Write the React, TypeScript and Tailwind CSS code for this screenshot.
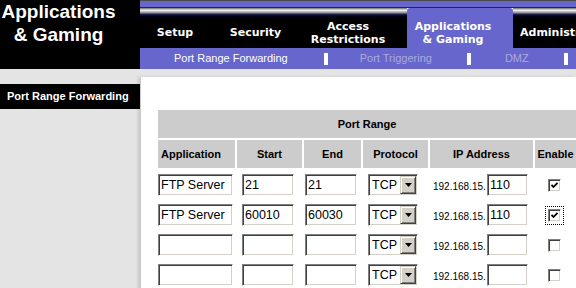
const PURPLE = 'bg-[#6666cc]';

function Stripes() {
  return (
    <div className="flex flex-col">
      <div className="h-[1px] bg-[#8a8a8a]" />
      <div className="h-[1px] bg-[#c4c4c4]" />
      <div className="h-[1px] bg-[#ececec]" />
      <div className="h-[1px] bg-[#c0c0c0]" />
      <div className="h-[1px] bg-[#9a9a9a]" />
      <div className="h-[1px] bg-[#5a5a5a]" />
      <div className="h-[1px] bg-[#1c1c44]" />
      <div className="h-[1px] bg-[#0a0a33]" />
      <div className="h-[1px] bg-[#000018]" />
    </div>
  );
}

function Tab({ w, children, left }: { w: string; children: React.ReactNode; left?: boolean }) {
  return (
    <div className={`${w} flex flex-col shrink-0`}>
      <Stripes />
      <div
        className={`flex-1 bg-black flex items-center text-white font-bold text-[11px] leading-[13px] whitespace-nowrap font-['DejaVu_Sans',Verdana,sans-serif] ${
          left ? 'justify-start pl-[7px]' : 'justify-center text-center'
        }`}
      >
        <div>{children}</div>
      </div>
    </div>
  );
}

function Field({ w, value, className = '' }: { w: string; value?: string; className?: string }) {
  return (
    <div
      className={`${w} ${className} h-[22px] bg-white border border-t-[#808080] border-l-[#808080] border-b-white border-r-white shadow-[inset_1px_1px_0_#404040,inset_-1px_-1px_0_#d4d0c8] flex items-center pl-[2px] text-[12.5px] text-black leading-none shrink-0`}
    >
      {value}
    </div>
  );
}

function Select() {
  return (
    <div className="ml-[5px] w-[50px] h-[22px] bg-white border border-t-[#808080] border-l-[#808080] border-b-white border-r-white shadow-[inset_1px_1px_0_#404040,inset_-1px_-1px_0_#d4d0c8] flex items-stretch p-[1px]">
      <div className="flex-1 flex items-center pl-[2px] text-[12.5px] leading-none text-black">TCP</div>
      <div className="w-[16px] bg-[#d4d0c8] border border-t-[#d4d0c8] border-l-[#d4d0c8] border-b-[#404040] border-r-[#404040] shadow-[inset_1px_1px_0_#ffffff,inset_-1px_-1px_0_#808080] flex items-center justify-center">
        <svg width="7" height="4" viewBox="0 0 7 4">
          <polygon points="0,0 7,0 3.5,4" fill="black" />
        </svg>
      </div>
    </div>
  );
}

function Check({ checked, focus }: { checked?: boolean; focus?: boolean }) {
  return (
    <div
      className={`ml-[13px] w-[13px] h-[13px] bg-white border border-t-[#808080] border-l-[#808080] border-b-white border-r-white shadow-[inset_1px_1px_0_#404040,inset_-1px_-1px_0_#d4d0c8] flex items-center justify-center ${
        focus ? 'outline-1 outline-dotted outline-black outline-offset-[2px]' : ''
      }`}
    >
      {checked && (
        <svg width="9" height="9" viewBox="0 0 9 9">
          <polyline points="1.5,3.8 3.5,6 7.5,1.8" fill="none" stroke="black" strokeWidth="1.8" />
        </svg>
      )}
    </div>
  );
}

const rows = [
  { app: 'FTP Server', start: '21', end: '21', ip: '110', on: true },
  { app: 'FTP Server', start: '60010', end: '60030', ip: '110', on: true, focus: true },
  { app: '', start: '', end: '', ip: '', on: false },
  { app: '', start: '', end: '', ip: '', on: false },
];

const cols = 'grid grid-cols-[77px_65px_57px_65px_103px_41px] gap-x-[2px]';

export default function App() {
  return (
    <div className="w-[576px] h-[288px] overflow-hidden bg-white font-['Liberation_Sans',Arial,sans-serif]">
      {/* Header */}
      <div className="flex h-[69px]">
        <div className="w-[140px] shrink-0 bg-black">
          <div className="w-[117px] text-center text-white font-bold text-[19px] leading-[23px] whitespace-nowrap">
            Applications
            <br />
            &amp; Gaming
          </div>
        </div>
        <div className="flex-1 min-w-0 flex flex-col">
          <div className="h-[1px] bg-[#4a4a4a]" />
          <div className={`h-[6px] ${PURPLE}`} />
          <div className="h-[1px] bg-[#2a2a2a]" />
          <div className="flex h-[40px] overflow-hidden">
            <Tab w="w-[70px]">Setup</Tab>
            <Tab w="w-[91px]">Security</Tab>
            <Tab w="w-[94px]">
              Access
              <br />
              Restrictions
            </Tab>
            <Tab w="w-[12px]">{''}</Tab>
            <div className={`w-[106px] shrink-0 ${PURPLE} rounded-t-[3px] flex items-center justify-center pr-[14px] pt-[9px] text-white font-bold text-[11px] leading-[13px] text-center whitespace-nowrap font-['DejaVu_Sans',Verdana,sans-serif]`}>
              <div>
                Applications
                <br />
                &amp; Gaming
              </div>
            </div>
            <Tab w="flex-1 min-w-0" left>
              Administration
            </Tab>
          </div>
          <div className={`h-[21px] ${PURPLE} flex items-center pl-[34px] text-[11px] whitespace-nowrap`}>
            <span className="text-white">Port Range Forwarding</span>
            <span className="ml-[36px] w-[4px] h-[12px] bg-white shrink-0" />
            <span className="ml-[32px] text-[#aaaadd]">Port Triggering</span>
            <span className="ml-[35px] w-[4px] h-[12px] bg-white shrink-0" />
            <span className="ml-[34px] text-[#aaaadd]">DMZ</span>
            <span className="ml-[35px] w-[4px] h-[12px] bg-white shrink-0" />
          </div>
        </div>
      </div>

      {/* Body */}
      <div className="flex h-[219px]">
        <div className="w-[140px] shrink-0 bg-[#e4e4e4] pt-[15px]">
          <div className="h-[25px] bg-black flex items-center pl-[7px] text-white font-bold text-[11px] whitespace-nowrap">
            Port Range Forwarding
          </div>
        </div>
        <div className="flex-1 min-w-0 flex flex-col bg-[#e4e4e4] pt-[8px]">
          <div className="flex-1 ml-[1px] bg-white shadow-[-3px_0_3px_rgba(0,0,0,0.12)] pl-[17px] pt-[33px]">
            <div className="w-[418px] text-[11px] font-bold text-black">
              <div className="h-[28px] bg-[#cccccc] flex items-center justify-center">Port Range</div>
              <div className={`${cols} mt-[2px] h-[28px]`}>
                <div className="bg-[#cccccc] flex items-center pl-[3px]">Application</div>
                <div className="bg-[#cccccc] flex items-center justify-center">Start</div>
                <div className="bg-[#cccccc] flex items-center justify-center">End</div>
                <div className="bg-[#cccccc] flex items-center justify-center">Protocol</div>
                <div className="bg-[#cccccc] flex items-center justify-center">IP Address</div>
                <div className="bg-[#cccccc] flex items-center justify-center">Enable</div>
              </div>
              <div className="mt-[2px] font-normal">
                {rows.map((r, i) => (
                  <div key={i} className={`${cols} h-[30px] items-center`}>
                    <div className="flex">
                      <Field w="w-[75px]" value={r.app} />
                    </div>
                    <div className="flex">
                      <Field w="w-[52px]" className="ml-[5px]" value={r.start} />
                    </div>
                    <div className="flex">
                      <Field w="w-[52px]" className="ml-[1px]" value={r.end} />
                    </div>
                    <div className="flex">
                      <Select />
                    </div>
                    <div className="flex items-center">
                      <span className="w-[57px] pl-[3px] pt-[3px] text-[10px] whitespace-nowrap">192.168.15.</span>
                      <Field w="w-[41px]" value={r.ip} />
                    </div>
                    <div className="flex">
                      <Check checked={r.on} focus={r.focus} />
                    </div>
                  </div>
                ))}
              </div>
            </div>
          </div>
        </div>
      </div>
    </div>
  );
}
